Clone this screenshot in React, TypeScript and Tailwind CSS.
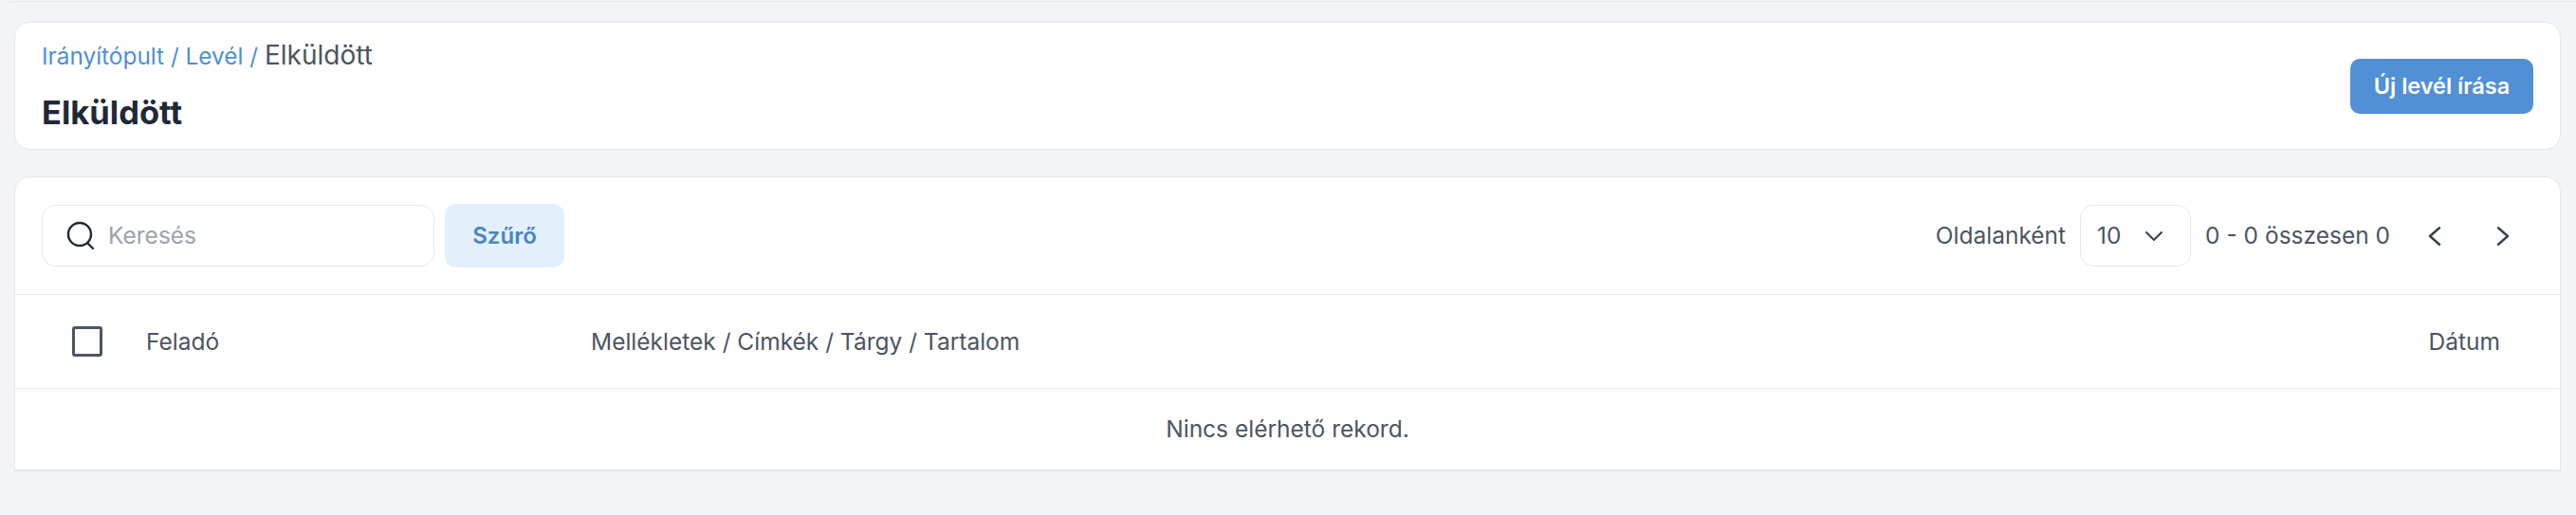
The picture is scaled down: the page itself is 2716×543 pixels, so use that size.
import React from "react";

const Chevron = ({ d, className }: { d: string; className: string }) => (
  <svg viewBox="0 0 24 24" fill="none" stroke="#374151" strokeWidth={2} strokeLinecap="round" strokeLinejoin="round" className={className}>
    <path d={d} />
  </svg>
);

export default function App() {
  return (
    <div className="h-[543px] w-[2716px] overflow-hidden bg-[#f3f4f6] pt-px font-['Inter',sans-serif]">
      <div className="h-full rounded-tl-[16px] border-t border-[#e5e7eb] px-[15px] pt-[21px]">
        <div className="flex h-[135px] w-[2685px] items-center justify-between rounded-[16px] border border-[#e5e7eb] bg-white pl-[28px] pr-[28px]">
          <div className="flex h-full flex-col">
            <div className="mt-[18px] text-[28px] leading-[32px] text-[#4b5563]">
              <span className="text-[24.4px] text-[#4f8fd6]">Irányítópult / Levél / </span>
              <span>Elküldött</span>
            </div>
            <h1 className="mt-[26px] text-[34.5px] font-bold leading-[36px] text-[#1f2937]">Elküldött</h1>
          </div>
          <button className="h-[58px] w-[193px] rounded-[10px] bg-[#5290d6] text-[23.5px] font-semibold text-white">Új levél írása</button>
        </div>
        <div className="mt-[28px] w-[2685px] rounded-t-[16px] border border-b-2 border-[#e5e7eb] bg-white text-[24.5px] text-[#4b5563]">
          <div className="flex h-[123px] items-center justify-between pl-[28px]">
            <div className="flex items-center gap-[11px]">
              <div className="flex h-[65px] w-[414px] items-center gap-[13px] rounded-[14px] border border-[#e5e7eb] pl-[24px]">
                <svg viewBox="0 0 32 32" fill="none" stroke="#1f2937" strokeWidth={2.4} strokeLinecap="round" className="h-[32px] w-[32px]">
                  <circle cx="15" cy="14" r="12" />
                  <path d="M24 24l5 5" />
                </svg>
                <span className="text-[#9ca3af]">Keresés</span>
              </div>
              <button className="h-[67px] w-[126px] rounded-[12px] bg-[#e3f0fc] text-[24px] font-semibold text-[#4a84c6]">Szűrő</button>
            </div>
            <div className="flex items-center">
              <span>Oldalanként</span>
              <div className="ml-[15px] flex h-[65px] w-[117px] items-center justify-between rounded-[14px] border border-[#e5e7eb] pl-[17px] pr-[26px]">
                <span>10</span>
                <Chevron d="M4 8l8 8 8-8" className="h-[24px] w-[24px]" />
              </div>
              <span className="ml-[15px]">0 - 0 összesen 0</span>
              <Chevron d="M16 5l-8 7 8 7" className="ml-[32px] h-[30px] w-[30px]" />
              <Chevron d="M8 5l8 7-8 7" className="ml-[42px] mr-[45px] h-[30px] w-[30px]" />
            </div>
          </div>
          <div className="flex h-[100px] items-center border-y border-[#e5e7eb]">
            <div className="ml-[60px] h-[32px] w-[32px] rounded-[3px] border-[3px] border-[#4b5563]" />
            <span className="ml-[46px] w-[469px]">Feladó</span>
            <span>Mellékletek / Címkék / Tárgy / Tartalom</span>
            <span className="ml-auto mr-[63px]">Dátum</span>
          </div>
          <div className="flex h-[85px] items-center justify-center">Nincs elérhető rekord.</div>
        </div>
      </div>
    </div>
  );
}
